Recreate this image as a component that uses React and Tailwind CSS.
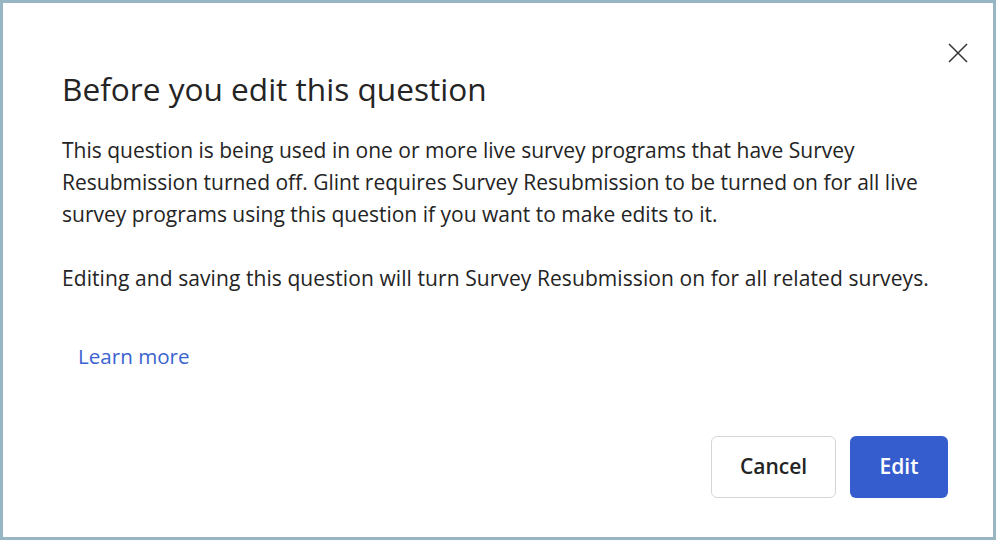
export default function App() {
  return (
    <div
      className="w-[996px] h-[540px] bg-white border-[3px] border-[#98b5c3] flex flex-col text-[#242424]"
      style={{ fontFamily: '"Open Sans", "Noto Sans", sans-serif' }}
    >
      <div className="flex justify-between items-start pl-[59px] pr-[25px] pt-[40px]">
        <h2 className="text-[31.6px] leading-[40px] mt-[26px]">Before you edit this question</h2>
        <button className="w-[20px] h-[20px] flex items-center justify-center text-[#333]">
          <svg width="20" height="20" viewBox="0 0 20 20" fill="none" stroke="currentColor" strokeWidth="1.5">
            <path d="M1 1 L19 19 M19 1 L1 19" />
          </svg>
        </button>
      </div>
      <div className="pl-[59px] pr-[30px] mt-[25px] text-[21px] leading-[32px]">
        <p>
          This question is being used in one or more live survey programs that have Survey
          <br />
          Resubmission turned off. Glint requires Survey Resubmission to be turned on for all live
          <br />
          survey programs using this question if you want to make edits to it.
        </p>
        <p className="mt-[32px] tracking-[0.08px]">
          Editing and saving this question will turn Survey Resubmission on for all related surveys.
        </p>
      </div>
      <div className="pl-[75px] mt-[46px]">
        <a href="#" className="text-[20.6px] text-[#3b63d0] leading-[32px]">
          Learn more
        </a>
      </div>
      <div className="flex justify-end gap-[14px] pr-[45px] mt-auto mb-[39px]">
        <button className="w-[125px] h-[62px] rounded-[6px] border border-[#d6d6d6] bg-white text-[21px] font-semibold">
          Cancel
        </button>
        <button className="w-[98px] h-[62px] rounded-[6px] bg-[#355dcd] text-white text-[21px] font-semibold">
          Edit
        </button>
      </div>
    </div>
  );
}
